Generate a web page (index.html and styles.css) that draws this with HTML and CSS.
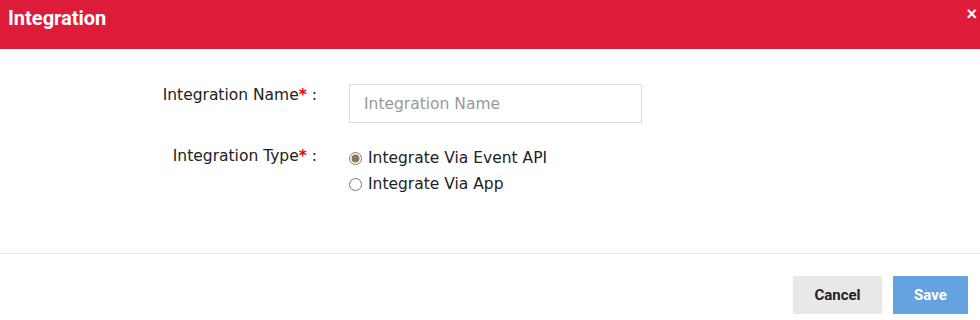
FILE: index.html
```html
<!DOCTYPE html>
<html lang="en">

<head>
    <meta charset="UTF-8">
    <title>Integration</title>
    <link rel="stylesheet" href="styles.css">
</head>

<body>
    <div class="modal">
        <div class="modal-header">
            <div class="modal-title">Integration</div>
            <span class="close">&times;</span>
        </div>

        <div class="modal-body">
            <div class="row row-name">
                <label class="label">Integration Name<span class="req">*</span> :</label>
                <div class="field">
                    <input type="text" class="text-input" placeholder="Integration Name">
                </div>
            </div>
            <div class="row row-type">
                <label class="label">Integration Type<span class="req">*</span> :</label>
                <div class="field radios">
                    <label class="radio"><input type="radio" name="type" checked> Integrate Via Event API</label>
                    <label class="radio"><input type="radio" name="type"> Integrate Via App</label>
                </div>
            </div>
        </div>

        <div class="modal-footer">
            <button class="btn btn-cancel">Cancel</button>
            <button class="btn btn-save">Save</button>
        </div>
    </div>
</body>

</html>
```

FILE: styles.css
```css
* {
    box-sizing: border-box;
}

body {
    margin: 0;
    background-color: #ffffff;
    font-family: "DejaVu Sans", sans-serif;
    color: #222;
}

.modal {
    width: 980px;
}

.modal-header {
    height: 49px;
    background-color: #dc1c38;
    color: #fff;
    display: flex;
    justify-content: space-between;
    padding: 0 3px 0 8px;
}

.modal-title {
    font-family: Roboto, sans-serif;
    font-weight: 700;
    font-size: 20px;
    line-height: 36px;
}

.close {
    font-family: "Liberation Sans", sans-serif;
    font-weight: 700;
    font-size: 18px;
    line-height: 28px;
}

.modal-body {
    padding: 37px 0 56px;
    border-bottom: 1px solid #e5e5e5;
}

.row {
    display: flex;
    align-items: flex-start;
}

.row-name .label {
    margin-top: -2px;
}

.row-type {
    margin-top: 22px;
}

.label {
    width: 317px;
    text-align: right;
    font-size: 15.5px;
    line-height: 22px;
    color: #222;
}

.req {
    color: #e00;
    font-weight: 700;
}

.field {
    margin-left: 32px;
}

.text-input {
    width: 293px;
    height: 39px;
    border: 1px solid #dcdcdc;
    padding: 0 14px;
    font-family: "DejaVu Sans", sans-serif;
    font-size: 15.5px;
    margin-top: -2px;
    outline: none;
}

.text-input::placeholder {
    color: #999;
}

.radios {
    display: flex;
    flex-direction: column;
}

.radio {
    font-size: 15.5px;
    line-height: 26px;
    display: flex;
    align-items: center;
}

.radio input {
    margin: 0 6px 0 0;
    width: 13px;
    height: 13px;
    accent-color: #8a7a5a;
}

.modal-footer {
    display: flex;
    justify-content: flex-end;
    padding: 22px 12px 0 0;
    gap: 11px;
}

.btn {
    height: 38px;
    border: none;
    font-family: Roboto, sans-serif;
    font-weight: 700;
    font-size: 15px;
}

.btn-cancel {
    width: 89px;
    background-color: #e8e8e8;
    color: #222;
}

.btn-save {
    width: 75px;
    background-color: #65a2e0;
    color: #fff;
}
```
